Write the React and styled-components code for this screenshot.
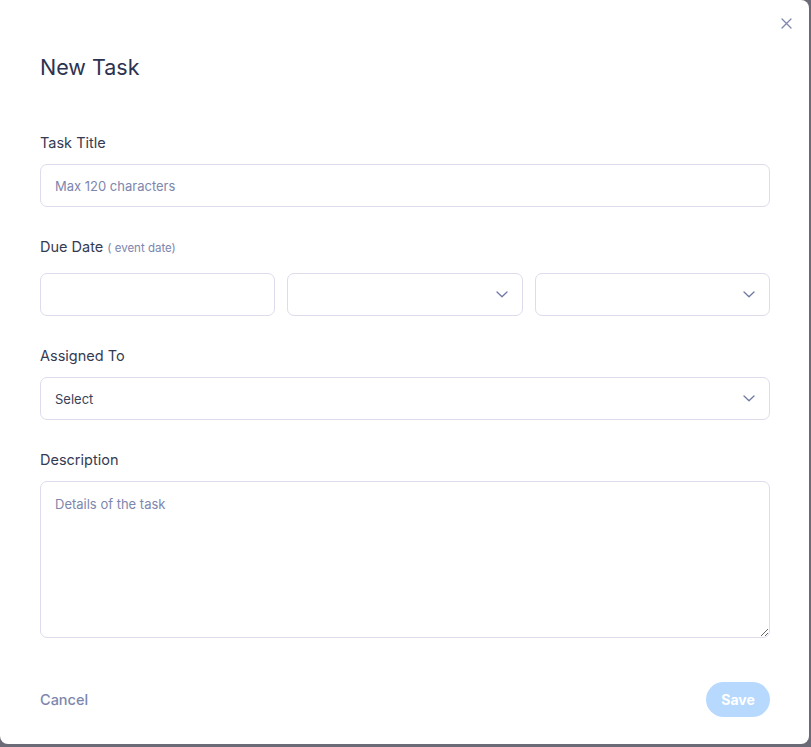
import React from "react";
import styled, { createGlobalStyle } from "styled-components";

const Global = createGlobalStyle`
  html, body { margin: 0; padding: 0; }
  body {
    background: #6b6b77;
    font-family: Inter, "Noto Sans", sans-serif;
    -webkit-font-smoothing: antialiased;
  }
  * { box-sizing: border-box; }
`;

const Modal = styled.div`
  position: relative;
  width: 809px;
  height: 744px;
  background: #fff;
  border-radius: 0 8px 8px 8px;
  padding: 54px 39px 0 40px;
  display: flex;
  flex-direction: column;
`;

const Close = styled.button`
  position: absolute;
  top: 16px;
  right: 16px;
  width: 14px;
  height: 14px;
  padding: 0;
  border: none;
  background: transparent;
  display: flex;
  align-items: center;
  justify-content: center;
  cursor: pointer;
`;

const Title = styled.h1`
  margin: 0 0 53px 0;
  font-size: 21.5px;
  line-height: 26px;
  font-weight: 400;
  color: #2d3250;
`;

const Field = styled.div`
  display: flex;
  flex-direction: column;
  margin-bottom: 30px;
`;

const Label = styled.label`
  font-size: 14.5px;
  line-height: 20px;
  color: #343a52;
  margin-bottom: ${(p) => p.$gap || 11}px;
  display: flex;
  align-items: baseline;
  gap: 4px;
`;

const SubLabel = styled.span`
  font-size: 11.5px;
  color: #7d86ad;
`;

const boxCss = `
  width: 100%;
  height: 43px;
  border: 1px solid #dcdcec;
  border-radius: 7px;
  background: #fff;
  font-family: Inter, "Noto Sans", sans-serif;
  font-size: 13px;
  color: #343a52;
  outline: none;
`;

const Input = styled.input`
  ${boxCss}
  padding: 0 14px;
  &::placeholder { color: #7d86ad; }
`;

const Row = styled.div`
  display: grid;
  grid-template-columns: 1fr 1fr 1fr;
  gap: 12px;
`;

const SelectBox = styled.div`
  ${boxCss}
  display: flex;
  align-items: center;
  justify-content: space-between;
  padding: 0 14px 0 14px;
  font-size: 13px;
  color: #3a3f58;
`;

const TextArea = styled.textarea`
  ${boxCss}
  height: 157px;
  padding: 14px 14px;
  resize: vertical;
  &::placeholder { color: #7d86ad; }
`;

const Footer = styled.div`
  display: flex;
  justify-content: space-between;
  align-items: center;
  margin-top: 14px;
`;

const CancelBtn = styled.button`
  border: none;
  background: transparent;
  padding: 0;
  font-family: Inter, "Noto Sans", sans-serif;
  font-size: 14.5px;
  font-weight: 500;
  color: #7d86ad;
  cursor: pointer;
`;

const SaveBtn = styled.button`
  width: 64px;
  height: 35px;
  border: none;
  border-radius: 18px;
  background: #b8d9fe;
  color: #fff;
  font-family: Inter, "Noto Sans", sans-serif;
  font-size: 14px;
  font-weight: 700;
  cursor: default;
`;

const Chevron = () => (
  <svg width="12" height="7" viewBox="0 0 12 7" fill="none">
    <path d="M1 1L6 5.8L11 1" stroke="#6f79a3" strokeWidth="1.3" strokeLinecap="round" strokeLinejoin="round" />
  </svg>
);

export default function App() {
  return (
    <>
      <Global />
      <Modal>
        <Close aria-label="Close">
          <svg width="11" height="11" viewBox="0 0 11 11" fill="none">
            <path d="M1 1L10 10M10 1L1 10" stroke="#7d86ad" strokeWidth="1.3" strokeLinecap="round" />
          </svg>
        </Close>
        <Title>New Task</Title>

        <Field>
          <Label>Task Title</Label>
          <Input placeholder="Max 120 characters" />
        </Field>

        <Field>
          <Label $gap={15}>
            Due Date <SubLabel>( event date)</SubLabel>
          </Label>
          <Row>
            <Input />
            <SelectBox>
              <span />
              <Chevron />
            </SelectBox>
            <SelectBox>
              <span />
              <Chevron />
            </SelectBox>
          </Row>
        </Field>

        <Field>
          <Label>Assigned To</Label>
          <SelectBox>
            <span>Select</span>
            <Chevron />
          </SelectBox>
        </Field>

        <Field>
          <Label>Description</Label>
          <TextArea placeholder="Details of the task" />
        </Field>

        <Footer>
          <CancelBtn>Cancel</CancelBtn>
          <SaveBtn>Save</SaveBtn>
        </Footer>
      </Modal>
    </>
  );
}
